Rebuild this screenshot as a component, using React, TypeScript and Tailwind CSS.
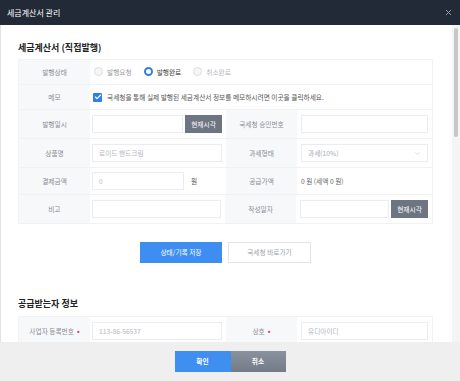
import { X, ChevronDown, Check } from 'lucide-react';

function Label({ children, required }: { children: React.ReactNode; required?: boolean }) {
  return (
    <div className="flex items-center justify-center text-[6.7px] text-[#8a8d93]">
      {children}
      {required && <span className="ml-[3px] text-[8px] leading-none text-[#e8365d]">•</span>}
    </div>
  );
}

function Field({ placeholder, className = '' }: { placeholder?: string; className?: string }) {
  return (
    <input
      readOnly
      placeholder={placeholder}
      className={`h-[18px] border border-[#eaecef] bg-white px-[6px] text-[6.7px] text-[#555] outline-none placeholder:text-[#b4b7bc] ${className}`}
    />
  );
}

function NowButton() {
  return (
    <button className="ml-[2px] h-[18px] w-[37px] shrink-0 bg-[#6e7582] text-[6.7px] text-white">현재시각</button>
  );
}

function Radio({ label, checked, disabled }: { label: string; checked?: boolean; disabled?: boolean }) {
  return (
    <label className="flex items-center gap-[4px]">
      <span
        className={
          checked
            ? 'h-[9px] w-[9px] rounded-full border-[2.5px] border-[#2f7fe6] bg-white'
            : 'h-[9px] w-[9px] rounded-full border-[1.5px] border-[#dcdde0] bg-[#f6f6f7]'
        }
      />
      <span className={`text-[6.7px] ${disabled ? 'text-[#b8babd]' : checked ? 'text-[#444]' : 'text-[#9a9ca0]'}`}>
        {label}
      </span>
    </label>
  );
}

export default function App() {
  return (
    <div className="flex h-[381px] w-[460px] flex-col overflow-hidden bg-white font-['Noto_Sans_CJK_KR','Noto_Sans',sans-serif]">
      {/* header */}
      <div className="flex h-[25px] shrink-0 items-center justify-between bg-[#222a38] pl-[7px] pr-[7px]">
        <span className="text-[8px] text-white">세금계산서 관리</span>
        <X size={9} strokeWidth={2.6} className="text-[#9aa0aa]" />
      </div>

      {/* body */}
      <div className="flex h-[317px] shrink-0 border-l border-[#e2e2e2]">
        <div className="flex-1 overflow-hidden pl-[17px] pr-[19px] pt-[17px]">
          <h2 className="mb-[5px] h-[12px] text-[9px] font-bold leading-[12px] text-[#222]">세금계산서 (직접발행)</h2>

          <div className="border border-[#f1f2f4] text-[6.7px]">
            <div className="flex h-[25px] border-b border-[#f1f2f4]">
              <div className="flex w-[71px] justify-center bg-[#f7f8fa]">
                <Label>발행상태</Label>
              </div>
              <div className="flex flex-1 items-center gap-[12px] pl-[4px]">
                <Radio label="발행요청" />
                <Radio label="발행완료" checked />
                <Radio label="취소완료" disabled />
              </div>
            </div>

            <div className="flex h-[25px] border-b border-[#f1f2f4]">
              <div className="flex w-[71px] justify-center bg-[#f7f8fa]">
                <Label>메모</Label>
              </div>
              <div className="flex flex-1 items-center gap-[5px] pl-[3px]">
                <span className="flex h-[9px] w-[9px] items-center justify-center rounded-[1px] bg-[#2f7fe6]">
                  <Check size={8} strokeWidth={3.5} className="text-white" />
                </span>
                <span className="text-[#555]">국세청을 통해 실제 발행된 세금계산서 정보를 메모하시려면 이곳을 클릭하세요.</span>
              </div>
            </div>

            <div className="flex h-[29px] border-b border-[#f1f2f4]">
              <div className="flex w-[71px] justify-center bg-[#f7f8fa]">
                <Label>발행일시</Label>
              </div>
              <div className="flex w-[136px] items-center pl-[2px] pr-[4px]">
                <Field className="min-w-0 flex-1" />
                <NowButton />
              </div>
              <div className="flex w-[71px] justify-center bg-[#f7f8fa]">
                <Label>국세청 승인번호</Label>
              </div>
              <div className="flex flex-1 items-center px-[4px]">
                <Field className="min-w-0 flex-1" />
              </div>
            </div>

            <div className="flex h-[29px] border-b border-[#f1f2f4]">
              <div className="flex w-[71px] justify-center bg-[#f7f8fa]">
                <Label>상품명</Label>
              </div>
              <div className="flex w-[136px] items-center pl-[2px] pr-[4px]">
                <Field className="min-w-0 flex-1" placeholder="로이드 핸드크림" />
              </div>
              <div className="flex w-[71px] justify-center bg-[#f7f8fa]">
                <Label>과세형태</Label>
              </div>
              <div className="flex flex-1 items-center px-[4px]">
                <div className="flex h-[18px] flex-1 items-center justify-between border border-[#eaecef] px-[6px] text-[#a9acb1]">
                  <span>과세(10%)</span>
                  <ChevronDown size={7} strokeWidth={1.5} className="text-[#b8bbc0]" />
                </div>
              </div>
            </div>

            <div className="flex h-[27px] border-b border-[#f1f2f4]">
              <div className="flex w-[71px] justify-center bg-[#f7f8fa]">
                <Label>결제금액</Label>
              </div>
              <div className="flex w-[136px] items-center gap-[7px] pl-[2px] pr-[4px]">
                <Field className="w-[92px]" placeholder="0" />
                <span className="text-[#555]">원</span>
              </div>
              <div className="flex w-[71px] justify-center bg-[#f7f8fa]">
                <Label>공급가액</Label>
              </div>
              <div className="flex flex-1 items-center px-[4px] text-[#666]">0 원 (세액 0 원)</div>
            </div>

            <div className="flex h-[28px]">
              <div className="flex w-[71px] justify-center bg-[#f7f8fa]">
                <Label>비고</Label>
              </div>
              <div className="flex w-[136px] items-center pl-[2px] pr-[4px]">
                <Field className="min-w-0 flex-1" />
              </div>
              <div className="flex w-[71px] justify-center bg-[#f7f8fa]">
                <Label>작성일자</Label>
              </div>
              <div className="flex flex-1 items-center px-[4px]">
                <Field className="min-w-0 flex-1" />
                <NowButton />
              </div>
            </div>
          </div>

          <div className="mt-[18px] flex justify-center gap-[6px]">
            <button className="h-[21px] w-[82px] bg-[#3d8ef0] text-[6.7px] text-white">상태/기록 저장</button>
            <button className="h-[21px] w-[83px] border border-[#e3e5e8] bg-white text-[6.7px] text-[#a0a3a8]">
              국세청 바로가기
            </button>
          </div>

          <h2 className="mb-[6px] mt-[35px] h-[12px] text-[9px] font-bold leading-[12px] text-[#222]">공급받는자 정보</h2>

          <div className="border border-[#f1f2f4] text-[6.7px]">
            <div className="flex h-[28px]">
              <div className="flex w-[71px] justify-center bg-[#f7f8fa]">
                <Label required>사업자 등록번호</Label>
              </div>
              <div className="flex w-[136px] items-center pl-[2px] pr-[4px]">
                <Field className="min-w-0 flex-1" placeholder="113-86-56537" />
              </div>
              <div className="flex w-[71px] justify-center bg-[#f7f8fa]">
                <Label required>상호</Label>
              </div>
              <div className="flex flex-1 items-center px-[4px]">
                <Field className="min-w-0 flex-1" placeholder="유디아이디" />
              </div>
            </div>
          </div>
        </div>

        {/* scrollbar */}
        <div className="w-[8px] shrink-0 bg-[#f4f4f5] pt-[3px]">
          <div className="mx-auto h-[109px] w-[4px] rounded-[2px] bg-[#c6c7c9]" />
        </div>
      </div>

      {/* footer */}
      <div className="flex flex-1 items-center justify-center bg-[#efefef]">
        <button className="h-[21px] w-[56px] bg-[#3f8ff0] text-[6.7px] font-bold text-white">확인</button>
        <button className="h-[21px] w-[55px] bg-gradient-to-b from-[#8a929f] to-[#737b89] text-[6.7px] font-bold text-white">
          취소
        </button>
      </div>
    </div>
  );
}
